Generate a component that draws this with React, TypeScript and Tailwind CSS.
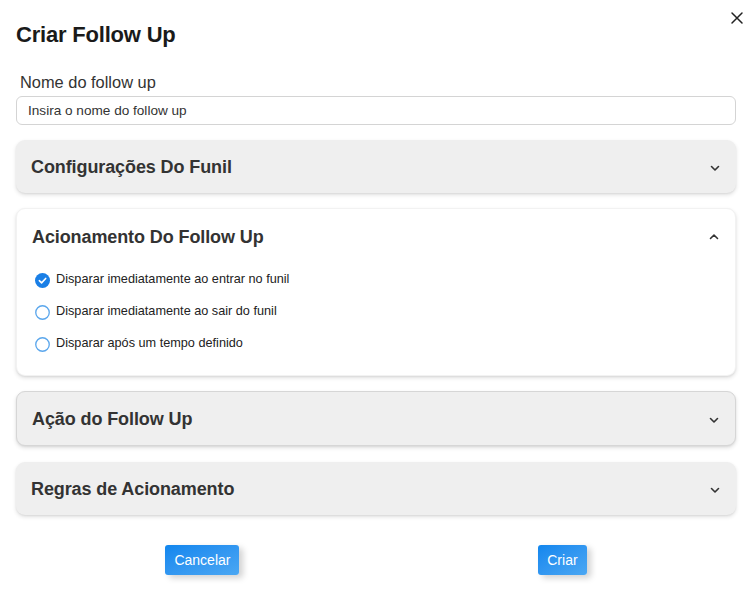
import React, { useState } from 'react';

const FONT = "font-['Liberation_Sans','Helvetica',Arial,sans-serif]";

const TRIGGER_OPTIONS = [
  'Disparar imediatamente ao entrar no funil',
  'Disparar imediatamente ao sair do funil',
  'Disparar após um tempo definido',
];

function Chevron({ up }: { up?: boolean }) {
  return (
    <svg width="10" height="10" viewBox="0 0 10 10" className="text-[#333]">
      <path
        d={up ? 'M1.5 6.5 L5 3 L8.5 6.5' : 'M1.5 3.5 L5 7 L8.5 3.5'}
        fill="none"
        stroke="currentColor"
        strokeWidth="1.6"
        strokeLinecap="round"
        strokeLinejoin="round"
      />
    </svg>
  );
}

function Radio({ checked }: { checked: boolean }) {
  if (checked) {
    return (
      <svg width="15" height="15" viewBox="0 0 16 16">
        <circle cx="8" cy="8" r="8" fill="#1a7fe6" />
        <path d="M4.6 8.2 L7 10.5 L11.4 5.8" fill="none" stroke="#fff" strokeWidth="1.7" strokeLinecap="round" strokeLinejoin="round" />
      </svg>
    );
  }
  return (
    <svg width="15" height="15" viewBox="0 0 16 16">
      <circle cx="8" cy="8" r="7.2" fill="#fff" stroke="#5aa6ec" strokeWidth="1.4" />
    </svg>
  );
}

function Section({
  title,
  open,
  bordered,
  onToggle,
  children,
}: {
  title: string;
  open: boolean;
  bordered?: boolean;
  onToggle: () => void;
  children?: React.ReactNode;
}) {
  return (
    <div
      className={`rounded-[9px] shadow-[0_2px_4px_rgba(0,0,0,0.12),0_1px_2px_rgba(0,0,0,0.06)] ${
        open ? 'bg-white border border-[#f2f2f2]' : 'bg-[#efefef]'
      } ${bordered ? 'border border-[#d6d6d6]' : ''}`}
    >
      <button
        type="button"
        onClick={onToggle}
        className={`w-full flex items-center justify-between pl-[15px] pr-[16px] ${open ? 'h-[56px]' : 'h-[53px] pt-[2px]'}`}
      >
        <span className="text-[18px] font-bold text-[#333] tracking-[-0.1px]">{title}</span>
        <Chevron up={open} />
      </button>
      {open && <div className="pb-[22px]">{children}</div>}
    </div>
  );
}

export default function App() {
  const [openSection, setOpenSection] = useState<number>(1);
  const [trigger, setTrigger] = useState(0);
  const [name, setName] = useState('');

  const toggle = (i: number) => setOpenSection(openSection === i ? -1 : i);

  return (
    <div className={`${FONT} w-[753px] h-[590px] bg-white relative text-[#222]`}>
      <button type="button" className="absolute top-[11px] right-[9px] text-[#222]" aria-label="Fechar">
        <svg width="14" height="14" viewBox="0 0 14 14">
          <path d="M2 2 L12 12 M12 2 L2 12" stroke="currentColor" strokeWidth="1.5" strokeLinecap="round" />
        </svg>
      </button>

      <div className="px-[16px] pt-[21px] w-[753px]">
        <h1 className="text-[22px] font-bold text-[#1a1a1a] leading-[28px] tracking-[-0.2px]">Criar Follow Up</h1>

        <div className="mt-[23px] pr-[1px]">
          <label className="block pl-[4px] text-[16.4px] text-[#333] leading-[20px]">Nome do follow up</label>
          <input
            value={name}
            onChange={e => setName(e.target.value)}
            placeholder="Insira o nome do follow up"
            className="mt-[4px] w-full h-[29px] rounded-[6px] border border-[#d4d4d4] px-[11px] text-[13.6px] text-[#333] placeholder:text-[#333] outline-none"
          />
        </div>

        <div className="mt-[15px] flex flex-col gap-[16px] pr-[1px]">
          <Section title="Configurações Do Funil" open={openSection === 0} onToggle={() => toggle(0)} />
          <div className="-mt-[1px]">
            <Section title="Acionamento Do Follow Up" open={openSection === 1} onToggle={() => toggle(1)}>
              <div className="flex flex-col gap-[14px] pl-[18px] pt-[6px]">
                {TRIGGER_OPTIONS.map((opt, i) => (
                  <label key={opt} className="flex items-center gap-[6px] h-[18px] cursor-pointer" onClick={() => setTrigger(i)}>
                    <Radio checked={trigger === i} />
                    <span className="text-[12.7px] text-[#222]">{opt}</span>
                  </label>
                ))}
              </div>
            </Section>
          </div>
          <div className="-mt-[1px]">
            <Section title="Ação do Follow Up" open={openSection === 2} bordered onToggle={() => toggle(2)} />
          </div>
          <Section title="Regras de Acionamento" open={openSection === 3} onToggle={() => toggle(3)} />
        </div>

        <div className="mt-[30px] flex justify-around pr-[1px]">
          <button
            type="button"
            className="h-[30px] px-[9px] rounded-[3px] text-white text-[14px] bg-gradient-to-br from-[#0f86ee] to-[#4aa7f3] shadow-[4px_3px_6px_rgba(0,0,0,0.18)]"
          >
            Cancelar
          </button>
          <button
            type="button"
            className="h-[30px] px-[9px] rounded-[3px] text-white text-[14px] bg-gradient-to-br from-[#0f86ee] to-[#4aa7f3] shadow-[4px_3px_6px_rgba(0,0,0,0.18)]"
          >
            Criar
          </button>
        </div>
      </div>
    </div>
  );
}
